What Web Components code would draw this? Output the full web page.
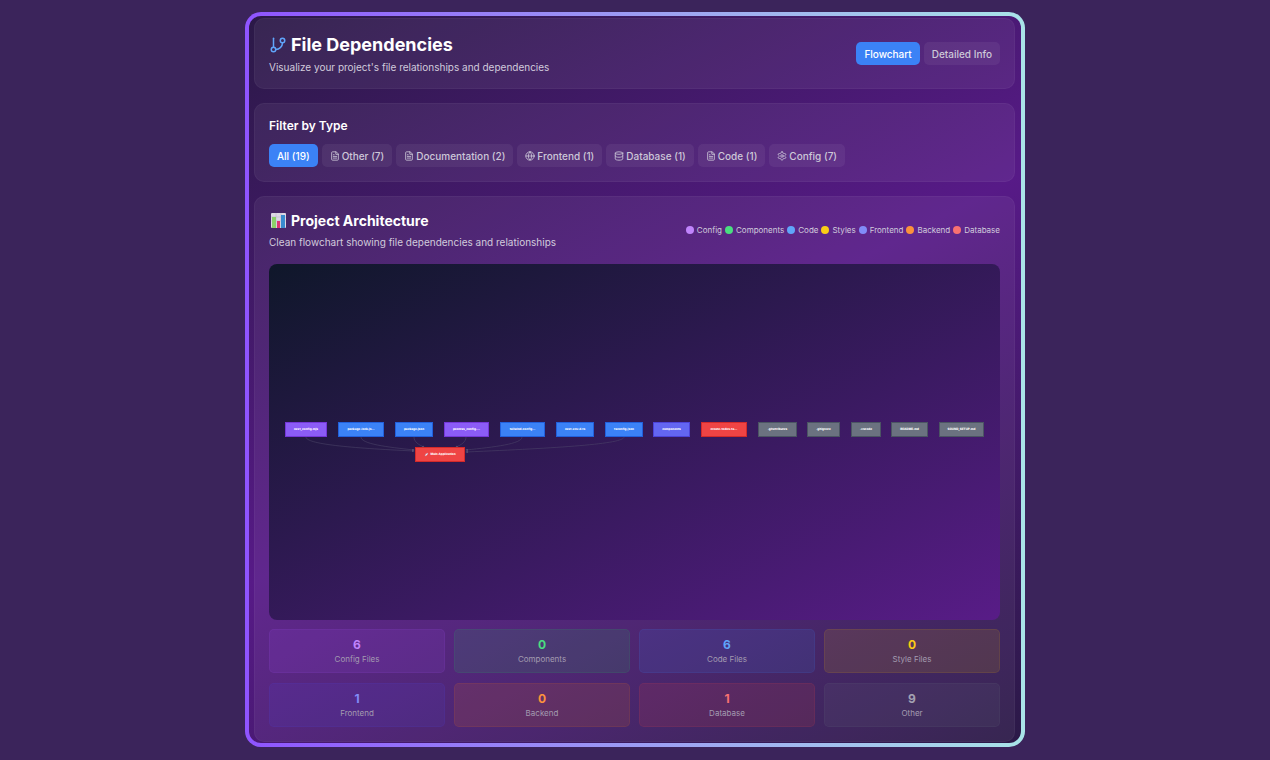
<!DOCTYPE html>
<html lang="en">
<head>
<meta charset="utf-8">
<meta name="viewport" content="width=device-width, initial-scale=1">
<title>File Dependencies</title>
<style>
  body { margin: 0; background: #3b245b; color: #fff; font-family: Inter, "Liberation Sans", sans-serif; }
</style>
</head>
<body>
<dependency-app></dependency-app>

<script>
const ICONS = {
  file: '<path d="M14 2H6a2 2 0 0 0-2 2v16a2 2 0 0 0 2 2h12a2 2 0 0 0 2-2V8z"/><path d="M14 2v6h6"/><path d="M16 13H8M16 17H8M10 9H8"/>',
  globe: '<circle cx="12" cy="12" r="10"/><path d="M2 12h20"/><path d="M12 2a15.3 15.3 0 0 1 4 10 15.3 15.3 0 0 1-4 10 15.3 15.3 0 0 1-4-10 15.3 15.3 0 0 1 4-10z"/>',
  database: '<ellipse cx="12" cy="5" rx="9" ry="3"/><path d="M21 12c0 1.66-4 3-9 3s-9-1.34-9-3"/><path d="M3 5v14c0 1.66 4 3 9 3s9-1.34 9-3V5"/>',
  settings: '<path d="M12.22 2h-.44a2 2 0 0 0-2 2v.18a2 2 0 0 1-1 1.73l-.43.25a2 2 0 0 1-2 0l-.15-.08a2 2 0 0 0-2.73.73l-.22.38a2 2 0 0 0 .73 2.73l.15.1a2 2 0 0 1 1 1.72v.51a2 2 0 0 1-1 1.74l-.15.09a2 2 0 0 0-.73 2.73l.22.38a2 2 0 0 0 2.73.73l.15-.08a2 2 0 0 1 2 0l.43.25a2 2 0 0 1 1 1.73V20a2 2 0 0 0 2 2h.44a2 2 0 0 0 2-2v-.18a2 2 0 0 1 1-1.73l.43-.25a2 2 0 0 1 2 0l.15.08a2 2 0 0 0 2.73-.73l.22-.39a2 2 0 0 0-.73-2.73l-.15-.08a2 2 0 0 1-1-1.74v-.5a2 2 0 0 1 1-1.74l.15-.09a2 2 0 0 0 .73-2.73l-.22-.38a2 2 0 0 0-2.73-.73l-.15.08a2 2 0 0 1-2 0l-.43-.25a2 2 0 0 1-1-1.73V4a2 2 0 0 0-2-2z"/><circle cx="12" cy="12" r="3"/>',
  branch: '<path d="M6 3v12"/><circle cx="18" cy="6" r="3"/><circle cx="6" cy="18" r="3"/><path d="M18 9a9 9 0 0 1-9 9"/>'
};

class BaseElement extends HTMLElement {
  connectedCallback() {
    if (!this.shadowRoot) this.attachShadow({ mode: "open" }).innerHTML = this.render();
  }
}

customElements.define("line-icon", class extends BaseElement {
  render() {
    return `<style>
      :host { display: block; flex: none; width: 10px; height: 10px; }
      svg { display: block; width: 100%; height: 100%; fill: none; stroke: currentColor; stroke-width: 2; stroke-linecap: round; stroke-linejoin: round; }
    </style><svg viewBox="0 0 24 24" aria-hidden="true">${ICONS[this.getAttribute("name")]}</svg>`;
  }
});

customElements.define("glow-frame", class extends BaseElement {
  render() {
    return `<style>
      :host { display: block; box-sizing: border-box; max-width: 780px; margin: 12px auto; padding: 4px; border-radius: 16px;
        background: linear-gradient(90deg, #8f54ff, #a9e4e8); }
      .inner { display: flex; flex-direction: column; gap: 14px; padding: 2px 6px 1px 5px; border-radius: 12px;
        background: linear-gradient(152deg, #2b1947, #571a87 50%, #2b1947); }
    </style><div class="inner"><slot></slot></div>`;
  }
});

customElements.define("glass-card", class extends BaseElement {
  render() {
    return `<style>
      :host { display: block; padding: 14px; border: 1px solid rgba(255,255,255,.04); border-radius: 10px; background: rgba(255,255,255,.06); }
    </style><slot></slot>`;
  }
});

customElements.define("pill-button", class extends BaseElement {
  render() {
    const icon = this.getAttribute("icon");
    return `<style>
      :host { display: block; }
      button { display: flex; align-items: center; gap: 2px; height: 23px; margin: 0; padding: 0 8px; border: 0; border-radius: 5px;
        background: rgba(255,255,255,.06); color: #cdc8d8; font: 500 10px/14px Inter, sans-serif; white-space: nowrap; cursor: pointer; }
      :host([active]) button { background: #3b82f6; color: #fff; }
    </style><button type="button" aria-pressed="${this.hasAttribute("active")}">${icon ? `<line-icon name="${icon}"></line-icon>` : ""}<slot></slot></button>`;
  }
});

customElements.define("legend-item", class extends BaseElement {
  render() {
    return `<style>
      :host { display: flex; align-items: center; gap: 3px; font-size: 8px; line-height: 12px; color: #d1cbdc; white-space: nowrap; }
      i { width: 8px; height: 8px; border-radius: 50%; background: ${this.getAttribute("color")}; }
    </style><i></i><slot></slot>`;
  }
});

customElements.define("stat-tile", class extends BaseElement {
  render() {
    return `<style>
      :host { display: block; padding: 7px; border: 1px solid rgba(var(--tint), .1); border-radius: 5px; background: rgba(var(--tint), .12); text-align: center; }
      b { display: block; font-size: 12px; line-height: 16px; color: var(--ink); }
      span { display: block; font-size: 8px; line-height: 12px; color: #a39bb0; }
    </style><b>${this.getAttribute("value")}</b><span><slot></slot></span>`;
  }
});

customElements.define("flow-chart", class extends BaseElement {
  render() {
    const fills = { violet: ["#8b5cf6", "#7437d8"], blue: ["#3b82f6", "#2160dc"], indigo: ["#6366f1", "#4c43d8"], red: ["#ef4444", "#d22a2a"], gray: ["#6b7280", "#4b5563"] };
    const nodes = [
      [16, 158, 42, "violet", "next_config.mjs"], [69, 158, 46, "blue", "package-lock.js..."],
      [126, 158, 38, "blue", "package.json"], [175, 158, 45, "violet", "postcss_config...."],
      [231, 158, 45, "blue", "tailwind.config..."], [287, 158, 38, "blue", "next-env.d.ts"],
      [336, 158, 38, "blue", "tsconfig.json"], [384, 158, 37, "indigo", "components"],
      [432, 158, 46, "red", "create-todos-ta..."], [489, 158, 39, "gray", ".gitattributes"],
      [538, 158, 33, "gray", ".gitignore"], [582, 158, 30, "gray", ".vscode"],
      [622, 158, 37, "gray", "README.md"], [670, 158, 45, "gray", "SOUND_SETUP.md"],
      [146, 183, 50, "red", "Main Application"]
    ];
    const edges = [
      "M37 173C37 180 80 184 145 187", "M92 173C92 180 118 183 145 186", "M145 173C145 178 150 181 155 183",
      "M197 173C197 178 192 181 187 183", "M253 173C253 180 225 183 197 186", "M355 173C355 180 290 184 197 188"
    ];
    return `<style>
      :host { display: block; border-radius: 8px; overflow: hidden; background: linear-gradient(to bottom right, #0f172a, #581c87); }
      svg { display: block; width: 100%; height: auto; }
      text { font: 800 3px Inter, sans-serif; text-rendering: geometricPrecision; fill: #fff; text-anchor: middle; }
      .edge { fill: none; stroke: #514a6c; stroke-width: .5; marker-end: url(#tip); }
    </style>
    <svg viewBox="0 0 731 356" role="img" aria-label="File dependency flowchart">
      <defs><marker id="tip" viewBox="0 0 4 4" refX="3" refY="2" markerWidth="5" markerHeight="5" orient="auto"><path d="M0 0L4 2L0 4z" fill="#5a5374"/></marker></defs>
      ${edges.map(d => `<path class="edge" d="${d}"/>`).join("")}
      ${nodes.map(([x, y, w, c, t]) => `<rect x="${x}" y="${y}" width="${w}" height="15" fill="${fills[c][1]}"/><rect x="${x + 1}" y="${y + 1}" width="${w - 2}" height="13" fill="${fills[c][0]}"/><text x="${x + w / 2 + (t[0] === "M" ? 3 : 0)}" y="${y + 8}">${t}</text>`).join("")}
      <path d="M156 192l1-2 2-1-1 2zM157 190l-1 0" fill="#fff" stroke="#9fc1e8" stroke-width=".3"/>
    </svg>`;
  }
});

customElements.define("dependency-app", class extends BaseElement {
  render() {
    const filters = [["Other (7)", "file"], ["Documentation (2)", "file"], ["Frontend (1)", "globe"], ["Database (1)", "database"], ["Code (1)", "file"], ["Config (7)", "settings"]];
    const legend = [["Config", "#c084fc"], ["Components", "#4ade80"], ["Code", "#60a5fa"], ["Styles", "#facc15"], ["Frontend", "#818cf8"], ["Backend", "#fb923c"], ["Database", "#f87171"]];
    const stats = [
      ["Config Files", 6, "168,85,247", "#c084fc"], ["Components", 0, "34,197,94", "#4ade80"],
      ["Code Files", 6, "59,130,246", "#60a5fa"], ["Style Files", 0, "234,179,8", "#facc15"],
      ["Frontend", 1, "79,70,229", "#818cf8"], ["Backend", 0, "249,115,22", "#fb923c"],
      ["Database", 1, "239,68,68", "#f87171"], ["Other", 9, "107,114,128", "#a3a1b2"]
    ];
    return `<style>
      :host { display: flow-root; }
      header { display: flex; align-items: center; justify-content: space-between; gap: 14px; }
      h1, h2, h3, p { margin: 0; }
      h1, h2 { display: flex; align-items: center; gap: 4px; font-weight: 700; }
      h1 { font-size: 18px; line-height: 24px; }
      h1 line-icon { width: 18px; height: 18px; color: #60a5fa; }
      h2 { font-size: 14px; line-height: 20px; }
      h3 { font-size: 12px; line-height: 16px; font-weight: 600; }
      p { font-size: 10px; line-height: 14px; color: #d1cbdc; }
      h1 + p { margin-top: 3px; }
      h2 + p { margin-top: 4px; }
      .row { display: flex; flex-wrap: wrap; gap: 4px; }
      h3 + .row { margin-top: 10px; }
      .legend { display: flex; flex-wrap: wrap; gap: 3px; }
      .chart-icon { width: 18px; height: 18px; }
      flow-chart { margin: 15px 0 9px; }
      .stats { display: grid; grid-template-columns: repeat(4, 1fr); gap: 10px 9px; }
    </style>
    <glow-frame>
      <glass-card>
        <header>
          <div><h1><line-icon name="branch"></line-icon>File Dependencies</h1><p>Visualize your project's file relationships and dependencies</p></div>
          <div class="row"><pill-button active>Flowchart</pill-button><pill-button>Detailed Info</pill-button></div>
        </header>
      </glass-card>
      <glass-card>
        <h3>Filter by Type</h3>
        <div class="row"><pill-button active>All (19)</pill-button>${filters.map(([t, i]) => `<pill-button icon="${i}">${t}</pill-button>`).join("")}</div>
      </glass-card>
      <glass-card>
        <header>
          <div>
            <h2><svg class="chart-icon" viewBox="0 0 18 18" aria-hidden="true"><rect x="2" y="1" width="15" height="15" rx="1" fill="#ddd8e5"/><path d="M2 5h15M2 9h15M7 1v15M12 1v15" stroke="#b9b3c8" stroke-width=".5"/><path d="M3 5h4v11H3z" fill="#8bd06a"/><path d="M8 9h3v7H8z" fill="#dc3474"/><path d="M12 3h4v13h-4z" fill="#388bd0"/></svg>Project Architecture</h2>
            <p>Clean flowchart showing file dependencies and relationships</p>
          </div>
          <div class="legend">${legend.map(([t, c]) => `<legend-item color="${c}">${t}</legend-item>`).join("")}</div>
        </header>
        <flow-chart></flow-chart>
        <div class="stats">${stats.map(([t, v, tint, ink]) => `<stat-tile value="${v}" style="--tint:${tint};--ink:${ink}">${t}</stat-tile>`).join("")}</div>
      </glass-card>
    </glow-frame>`;
  }
});
</script>
</body>
</html>
